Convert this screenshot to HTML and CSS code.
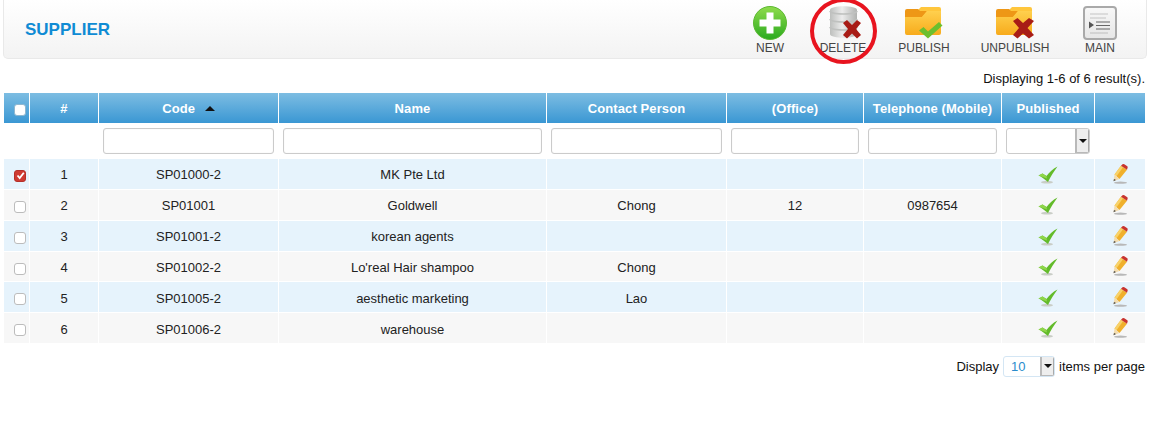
FILE: index.html
```html
<!DOCTYPE html>
<html lang="en">
<head>
<meta charset="utf-8">
<title>Supplier</title>
<link rel="stylesheet" href="styles.css">
</head>
<body>
<svg class="defs" width="0" height="0" aria-hidden="true">
  <defs>
    <linearGradient id="gGreen" x1="0" y1="0" x2="0" y2="1"><stop offset="0" stop-color="#8fdc4c"/><stop offset="1" stop-color="#2aaa1e"/></linearGradient>
    <linearGradient id="gFolder" x1="0" y1="0" x2="0" y2="1"><stop offset="0" stop-color="#ffd04e"/><stop offset="1" stop-color="#f7ab1c"/></linearGradient>
    <linearGradient id="gDb" x1="0" y1="0" x2="1" y2="0"><stop offset="0" stop-color="#bdbfbd"/><stop offset=".45" stop-color="#ececec"/><stop offset="1" stop-color="#b0b2b0"/></linearGradient>
    <linearGradient id="gPaper" x1="0" y1="0" x2="0" y2="1"><stop offset="0" stop-color="#f8f8f8"/><stop offset="1" stop-color="#e6e6e6"/></linearGradient>
    <symbol id="tick" viewBox="0 0 20 18">
      <ellipse cx="9" cy="16.200" rx="6" ry="1.400" fill="#c9cdc6"/>
      <path d="M.5 9.500 L4.500 7.500 L8.500 10 C11 6.500 14.500 3 19.500 .5 C16 5.500 12.500 10.500 10 16 C7 13.500 4 11 .5 9.500 Z" fill="#63bb2a"/>
      <path d="M.5 9.500 L4.500 7.500 L8.500 10 L9 12.500 Z" fill="#8fd64a"/>
    </symbol>
    <symbol id="pencil" viewBox="0 0 15 20">
      <ellipse cx="7.500" cy="18.700" rx="6.500" ry="1.100" fill="#b8b8b8"/>
      <path d="M1.500 10.500 L8 1.800 L14 5.800 L6.500 15 Z" fill="#f0b02c"/>
      <path d="M1.500 10.500 L8 1.800 L10 3.200 L3.500 12.200 Z" fill="#f8d269"/>
      <path d="M8 1.800 L9.500 .3 Q10.300 -.2 11.300 .3 L14.300 2.300 Q15 3 14.500 3.900 L14 5.800 Z" fill="#c8332e"/>
      <path d="M1.500 10.500 L6.500 15 L.5 17.300 Z" fill="#f3dcae"/>
      <path d="M.5 17.300 L1 15 L3 16 Z" fill="#444"/>
    </symbol>
  </defs>
</svg>

<header class="panel">
  <h1 class="title">SUPPLIER</h1>
  <nav class="tools">
    <a class="tool tool-new">
      <svg class="ico" width="36" height="36" viewBox="0 0 36 36">
        <circle cx="18" cy="18" r="16.500" fill="url(#gGreen)" stroke="#5cb832"/>
        <path d="M14.500 7.500h7v7h7v7h-7v7h-7v-7h-7v-7h7z" fill="#fff"/>
      </svg>
      <span class="tool-label">NEW</span>
    </a>
    <a class="tool tool-delete">
      <svg class="ico" width="36" height="36" viewBox="0 0 36 36">
        <path d="M5 5 C5 0 32 0 32 5 V29 C32 34 5 34 5 29 Z" fill="url(#gDb)"/>
        <path d="M5 6 C5 10 32 10 32 6 M5 14 C5 18 32 18 32 14 M5 22 C5 26 32 26 32 22" fill="none" stroke="#bfc1bf" stroke-width="1.500"/>
        <path d="M18 18 L22 15 L27 20 L32 15 L36 18 L31 24 L36 30 L32 33.500 L27 28.500 L22 33.500 L18 30 L23 24 Z" fill="#a81c16"/>
      </svg>
      <span class="tool-label">DELETE</span>
    </a>
    <a class="tool tool-publish">
      <svg class="ico" width="42" height="36" viewBox="0 0 42 36">
        <path d="M15 5 L18 2 H36 Q38 2 38 4 V14 H15 Z" fill="#ffc63c"/>
        <path d="M2 6 Q2 4 4 4 H15 L17 6 H24 L19 12 H2 Z" fill="#ee9716"/>
        <path d="M2 12 H19 L24 6 H38 V28 Q38 30 36 30 H4 Q2 30 2 28 Z" fill="url(#gFolder)"/>
        <path d="M16 25.500 L20.500 22 L25 26.500 L36 17 L39.500 20.500 L25 33.500 Z" fill="#6cbf2e"/>
      </svg>
      <span class="tool-label">PUBLISH</span>
    </a>
    <a class="tool tool-unpublish">
      <svg class="ico" width="42" height="36" viewBox="0 0 42 36">
        <path d="M15 5 L18 2 H36 Q38 2 38 4 V14 H15 Z" fill="#ffc63c"/>
        <path d="M2 6 Q2 4 4 4 H15 L17 6 H24 L19 12 H2 Z" fill="#ee9716"/>
        <path d="M2 12 H19 L24 6 H38 V28 Q38 30 36 30 H4 Q2 30 2 28 Z" fill="url(#gFolder)"/>
        <path d="M19 16 L23.500 13 L29 18 L35 13 L40 16 L33.500 23 L40 30 L35 33.500 L29 28.500 L23.500 33.500 L19 30 L25 23 Z" fill="#a81c16"/>
      </svg>
      <span class="tool-label">UNPUBLISH</span>
    </a>
    <a class="tool tool-main">
      <svg class="ico" width="36" height="36" viewBox="0 0 36 36">
        <rect x="2" y="2" width="32" height="32" rx="3" fill="url(#gPaper)" stroke="#a9a9a9" stroke-width="2"/>
        <path d="M8 9H26M8 13H24" stroke="#c4c4c4" stroke-width="1.200"/>
        <path d="M7 16.500 L12 20 L7 23.500 Z" fill="#555"/>
        <path d="M14 17H28M14 20.500H28M14 24H28" stroke="#666" stroke-width="1.200"/>
        <path d="M8 28H26" stroke="#c4c4c4" stroke-width="1.200"/>
      </svg>
      <span class="tool-label">MAIN</span>
    </a>
  </nav>
</header>
<div class="circle"></div>

<p class="results">Displaying 1-6 of 6 result(s).</p>

<table class="grid">
  <colgroup>
    <col class="c-check"><col class="c-num"><col class="c-code"><col class="c-name"><col class="c-contact"><col class="c-office"><col class="c-tel"><col class="c-pub"><col class="c-edit">
  </colgroup>
  <thead>
    <tr class="head">
      <th class="cell-check"><span class="box box-head"></span></th>
      <th>#</th>
      <th>Code <span class="sort"></span></th>
      <th>Name</th>
      <th>Contact Person</th>
      <th>(Office)</th>
      <th>Telephone (Mobile)</th>
      <th>Published</th>
      <th></th>
    </tr>
    <tr class="filter">
      <td></td><td></td>
      <td><input class="field" type="text"></td>
      <td><input class="field" type="text"></td>
      <td><input class="field" type="text"></td>
      <td><input class="field" type="text"></td>
      <td><input class="field" type="text"></td>
      <td><div class="select"><span class="select-btn"><span class="caret"></span></span></div></td>
      <td></td>
    </tr>
  </thead>
  <tbody>
    <tr class="row odd">
      <td class="cell-check"><span class="box box-on">
        <svg width="9" height="9" viewBox="0 0 9 9"><path d="M1.500 4.500 L3.700 7 L7.800 1.800" fill="none" stroke="#fff" stroke-width="1.800"/></svg>
      </span></td>
      <td>1</td><td>SP01000-2</td><td>MK Pte Ltd</td><td></td><td></td><td></td>
      <td class="cell-icon"><svg class="tick"><use href="#tick"/></svg></td><td class="cell-icon"><svg class="pencil"><use href="#pencil"/></svg></td>
    </tr>
    <tr class="row even">
      <td class="cell-check"><span class="box"></span></td>
      <td>2</td><td>SP01001</td><td>Goldwell</td><td>Chong</td><td>12</td><td>0987654</td>
      <td class="cell-icon"><svg class="tick"><use href="#tick"/></svg></td><td class="cell-icon"><svg class="pencil"><use href="#pencil"/></svg></td>
    </tr>
    <tr class="row odd">
      <td class="cell-check"><span class="box"></span></td>
      <td>3</td><td>SP01001-2</td><td>korean agents</td><td></td><td></td><td></td>
      <td class="cell-icon"><svg class="tick"><use href="#tick"/></svg></td><td class="cell-icon"><svg class="pencil"><use href="#pencil"/></svg></td>
    </tr>
    <tr class="row even">
      <td class="cell-check"><span class="box"></span></td>
      <td>4</td><td>SP01002-2</td><td>Lo'real Hair shampoo</td><td>Chong</td><td></td><td></td>
      <td class="cell-icon"><svg class="tick"><use href="#tick"/></svg></td><td class="cell-icon"><svg class="pencil"><use href="#pencil"/></svg></td>
    </tr>
    <tr class="row odd">
      <td class="cell-check"><span class="box"></span></td>
      <td>5</td><td>SP01005-2</td><td>aesthetic marketing</td><td>Lao</td><td></td><td></td>
      <td class="cell-icon"><svg class="tick"><use href="#tick"/></svg></td><td class="cell-icon"><svg class="pencil"><use href="#pencil"/></svg></td>
    </tr>
    <tr class="row even">
      <td class="cell-check"><span class="box"></span></td>
      <td>6</td><td>SP01006-2</td><td>warehouse</td><td></td><td></td><td></td>
      <td class="cell-icon"><svg class="tick"><use href="#tick"/></svg></td><td class="cell-icon"><svg class="pencil"><use href="#pencil"/></svg></td>
    </tr>
  </tbody>
</table>

<div class="pager">
  <span>Display</span>
  <div class="per-page"><span class="per-value">10</span><span class="select-btn"><span class="caret"></span></span></div>
  <span>items per page</span>
</div>
</body>
</html>
```

FILE: styles.css
```css
* { box-sizing: border-box; }

html, body {
  margin: 0;
  background: #fff;
}

body {
  width: 1150px;
  height: 426px;
  overflow: hidden;
  position: relative;
  font-family: "Liberation Sans", Arial, sans-serif;
  font-size: 13px;
  color: #222;
}

.defs { position: absolute; }

.panel {
  margin: 0 3px;
  height: 59px;
  padding: 0 19px 0 21px;
  display: flex;
  align-items: flex-start;
  justify-content: space-between;
  background: linear-gradient(#ffffff, #f3f3f3);
  border: 1px solid #e9e9e9;
  border-top: 0;
  border-radius: 0 0 5px 5px;
}

.title {
  margin: 21px 0 0;
  font-size: 17px;
  line-height: 18px;
  font-weight: bold;
  color: #0f8bd4;
}

.tools { display: flex; }

.tool {
  display: flex;
  flex-direction: column;
  align-items: center;
  height: 58px;
  color: #444;
  font-size: 12px;
}

.ico { display: block; margin-top: 5px; flex: none; }
.tool-label { margin-top: 0; line-height: 14px; white-space: nowrap; }

.tool-new { width: 50px; }
.tool-delete { width: 96px; }
.tool-publish { width: 66px; }
.tool-unpublish { width: 116px; }
.tool-main { width: 54px; }

.circle {
  position: absolute;
  left: 810px;
  top: -2px;
  width: 67px;
  height: 66px;
  border: 4px solid #e8141f;
  border-radius: 50%;
}

.results {
  margin: 13px 5px 0 0;
  line-height: 14px;
  text-align: right;
  color: #111;
}

.grid {
  margin: 6px 0 0 3px;
  width: 1142px;
  table-layout: fixed;
  border-collapse: separate;
  border-spacing: 1px;
  text-align: center;
}

.c-check { width: 25px; }
.c-num { width: 68px; }
.c-code { width: 179px; }
.c-name { width: 267px; }
.c-contact { width: 179px; }
.c-office { width: 136px; }
.c-tel { width: 137px; }
.c-pub { width: 92px; }
.c-edit { width: 50px; }

.grid th, .grid td { padding: 0; vertical-align: middle; }
.grid .cell-check { padding: 2px 0 0 7px; }

.head th {
  height: 30px;
  background: linear-gradient(#7dbde2, #3a97d3);
  color: #fff;
  font-size: 13px;
  font-weight: bold;
  letter-spacing: .1px;
}

.sort {
  display: inline-block;
  margin: 0 0 2px 6px;
  width: 0;
  height: 0;
  border: 5px solid transparent;
  border-top: 0;
  border-bottom: 5px solid #111;
}

.filter td { height: 34px; padding: 0 4px; }
.filter td:first-child, .filter td:nth-child(2) { padding: 0; }

.field {
  display: block;
  width: 100%;
  height: 26px;
  margin: 0;
  padding: 0 4px;
  background: #fff;
  border: 1px solid #cbcbcb;
  border-radius: 3px;
  box-shadow: inset 0 0 1px #ddd;
}

.select {
  display: flex;
  justify-content: flex-end;
  height: 26px;
  width: 84px;
  background: #fff;
  border: 1px solid #cbcbcb;
  border-radius: 3px;
  overflow: hidden;
}

.select-btn {
  display: flex;
  align-items: center;
  justify-content: center;
  width: 14px;
  background: #eeeeee;
  border-left: 2px solid #b9b9b9;
  border-right: 1px solid #aaa;
  border-bottom: 1px solid #b9b9b9;
}

.caret {
  width: 0;
  height: 0;
  border: 4px solid transparent;
  border-bottom: 0;
  border-top: 4px solid #111;
}

.row td { height: 29.85px; color: #222; padding-top: 2px; }
.row .cell-icon { padding-top: 0; }
.odd td { background: #e6f3fc; }
.even td { background: #f7f7f7; }

.box {
  display: inline-flex;
  align-items: center;
  justify-content: center;
  width: 12px;
  height: 12px;
  vertical-align: middle;
  background: #fff;
  border: 1px solid #bcbcbc;
  border-radius: 3px;
}

.box-head { border-color: #8fb7d0; }
.box-on { background: #cf3b32; border-color: #b53029; }

.tick { display: block; width: 20px; height: 18px; margin: 2px auto 0; }
.pencil { display: block; width: 15px; height: 20px; margin: 0 auto; }

.pager {
  display: flex;
  justify-content: flex-end;
  align-items: center;
  gap: 4px;
  margin: 12px 5px 0 0;
  color: #111;
}

.per-page {
  display: flex;
  justify-content: space-between;
  width: 52px;
  height: 21px;
  background: #fff;
  border: 1px solid #d4e6f4;
  border-radius: 3px;
  overflow: hidden;
}

.per-value {
  padding-left: 7px;
  line-height: 19px;
  color: #2a8ccc;
}
```
